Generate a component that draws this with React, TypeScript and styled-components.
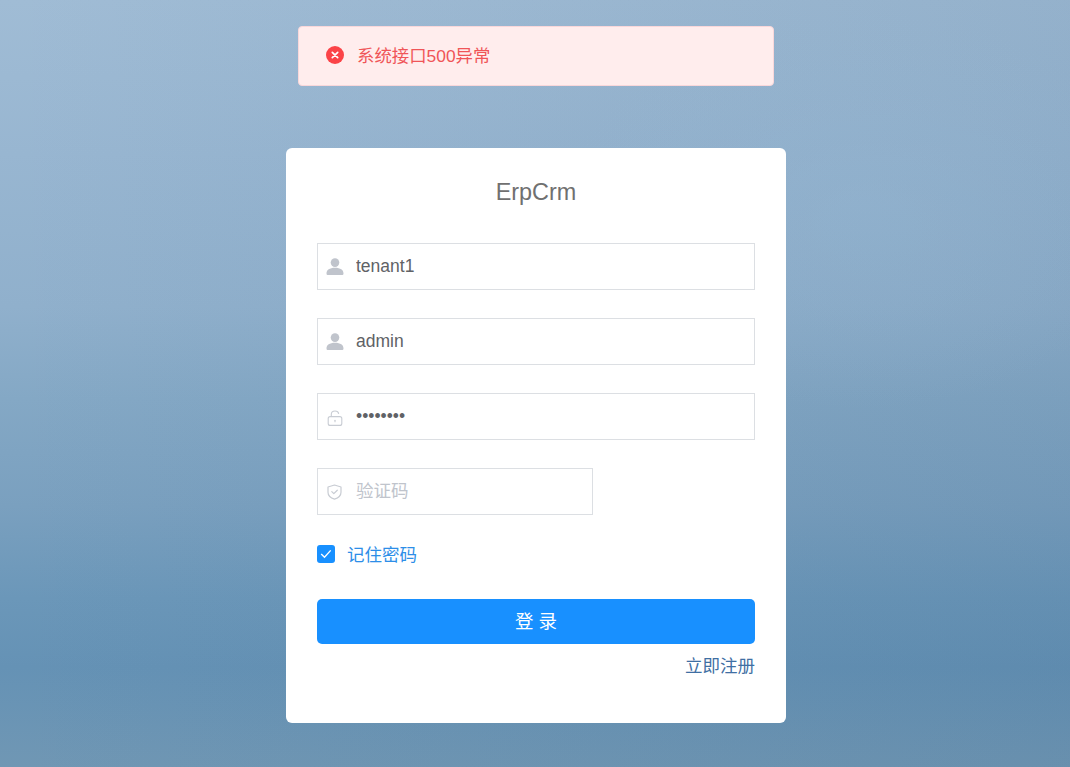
import React from "react";
import styled, { createGlobalStyle } from "styled-components";

const GlobalStyle = createGlobalStyle`
  html, body {
    margin: 0;
    padding: 0;
    height: 100%;
    overflow: hidden;
    font-family: "Liberation Sans", "Noto Sans CJK SC", sans-serif;
  }
`;

const Page = styled.div`
  position: relative;
  height: 767px;
  box-sizing: border-box;
  padding: 148px 0 0 2px;
  display: flex;
  justify-content: center;
  align-items: flex-start;
  overflow: hidden;
  background:
    radial-gradient(ellipse 300px 200px at 860px 210px, rgba(150, 184, 212, 0.35), rgba(150, 184, 212, 0) 100%),
    linear-gradient(90deg, rgba(30, 70, 110, 0) 0%, rgba(30, 70, 110, 0.04) 45%, rgba(30, 70, 110, 0.09) 100%),
    linear-gradient(180deg, #a0bcd5 0%, #98b6d1 20%, #90b0cc 40%, #84a8c5 52%, #7aa0bf 66%, #6b97b9 78%, #6592b5 87%, #7097b4 100%);
`;

const Message = styled.div`
  position: absolute;
  top: 26px;
  left: 298px;
  width: 476px;
  height: 60px;
  box-sizing: border-box;
  padding: 0 0 3px 27px;
  display: flex;
  align-items: center;
  gap: 13px;
  background: #ffeded;
  border: 1px solid #f9d7da;
  border-radius: 4px;
  color: #f05558;
  font-size: 17.4px;
`;

const MessageText = styled.span`
  margin-bottom: 1px;
`;

const Card = styled.form`
  width: 500px;
  height: 575px;
  box-sizing: border-box;
  padding: 0 31px;
  background: #fff;
  border-radius: 6px;
  display: flex;
  flex-direction: column;
`;

const Title = styled.h3`
  margin: 31px 0 37px;
  height: 27px;
  line-height: 27px;
  text-align: center;
  font-size: 23.4px;
  font-weight: 400;
  color: #707070;
`;

const Field = styled.div<{ $narrow?: boolean }>`
  width: ${(p) => (p.$narrow ? "276px" : "438px")};
  height: 47px;
  box-sizing: border-box;
  margin-bottom: 28px;
  display: flex;
  align-items: center;
  border: 1px solid #dcdfe3;
`;

const FieldIcon = styled.span<{ $drop?: number }>`
  width: 33px;
  margin-right: 4px;
  padding-top: ${(p) => p.$drop ?? 0}px;
  flex: none;
  display: flex;
  justify-content: center;
  align-items: center;
  color: #c0c4cc;
`;

const TextInput = styled.input`
  flex: 1;
  min-width: 0;
  height: 100%;
  padding: 0 0 0 1px;
  border: 0;
  outline: 0;
  background: transparent;
  font: inherit;
  font-size: 17.5px;
  color: #606266;

  &::placeholder {
    color: #c0c4cc;
  }
`;

const Remember = styled.label`
  margin-top: -2px;
  height: 26px;
  display: flex;
  align-items: center;
  gap: 12px;
  font-size: 17.5px;
  color: #2d8ee8;
`;

const RememberText = styled.span`
  margin-bottom: 2px;
`;

const CheckBox = styled.span`
  width: 18px;
  height: 18px;
  display: flex;
  justify-content: center;
  align-items: center;
  background: #1890ff;
  border-radius: 3px;
  color: #fff;
`;

const Submit = styled.button`
  margin-top: 32px;
  width: 100%;
  height: 45px;
  padding: 0 0 4px;
  border: 0;
  border-radius: 5px;
  background: #1890ff;
  color: #fff;
  font: inherit;
  font-size: 18.5px;
`;

const FootRow = styled.div`
  margin-top: 11px;
  display: flex;
  justify-content: flex-end;
`;

const RegisterLink = styled.a`
  font-size: 17.5px;
  line-height: 22px;
  color: #3f6fa3;
`;

const ErrorIcon = () => (
  <svg width="18" height="18" viewBox="0 0 18 18">
    <circle cx="9" cy="9" r="9" fill="#fb4347" />
    <path d="M6.3 6.3l5.4 5.4M11.7 6.3l-5.4 5.4" stroke="#fff" strokeWidth="1.7" strokeLinecap="round" />
  </svg>
);

const UserIcon = () => (
  <svg width="18" height="18" viewBox="0 0 18 18" fill="#c0c4cc">
    <circle cx="9" cy="4.6" r="4.3" />
    <path d="M0.5 15.500C0.5 12 3.600 9.800 9 9.800s8.500 2.200 8.500 5.700c0 1-.6 1.500-1.600 1.500H2.100c-1 0-1.600-.5-1.600-1.500z" />
  </svg>
);

const LockIcon = () => (
  <svg width="16" height="16" viewBox="0 0 16 16" fill="none" stroke="#c8ccd3" strokeWidth="1.1">
    <rect x="1.200" y="6.600" width="13.600" height="8.800" rx="2" />
    <path d="M4.300 6.600V4.300C4.300 2.300 5.900 1 8 1s3.400 1 3.700 2.800" />
    <path d="M8 10.300v1.500" strokeLinecap="round" />
  </svg>
);

const ShieldIcon = () => (
  <svg width="15" height="16" viewBox="0 0 15 16" fill="none" stroke="#c8ccd3" strokeWidth="1.200">
    <path d="M7.500 1L14 3v5.200c0 3.400-2.800 5.800-6.500 6.900C3.800 14 1 11.600 1 8.200V3z" strokeLinejoin="round" />
    <path d="M4.800 7.600l2 2 3.500-3.400" strokeLinecap="round" strokeLinejoin="round" />
  </svg>
);

const CheckIcon = () => (
  <svg width="12" height="10" viewBox="0 0 12 10" fill="none" stroke="#fff" strokeWidth="1.400">
    <path d="M1.200 5l3.300 3.200 6.200-6.800" />
  </svg>
);

export default function App() {
  return (
    <>
      <GlobalStyle />
      <Page>
        <Message>
          <ErrorIcon />
          <MessageText>系统接口500异常</MessageText>
        </Message>
        <Card onSubmit={(e) => e.preventDefault()}>
          <Title>ErpCrm</Title>
          <Field>
            <FieldIcon><UserIcon /></FieldIcon>
            <TextInput defaultValue="tenant1" />
          </Field>
          <Field>
            <FieldIcon><UserIcon /></FieldIcon>
            <TextInput defaultValue="admin" />
          </Field>
          <Field>
            <FieldIcon $drop={2}><LockIcon /></FieldIcon>
            <TextInput type="password" defaultValue="admin123" />
          </Field>
          <Field $narrow>
            <FieldIcon><ShieldIcon /></FieldIcon>
            <TextInput placeholder="验证码" />
          </Field>
          <Remember>
            <CheckBox><CheckIcon /></CheckBox>
            <RememberText>记住密码</RememberText>
          </Remember>
          <Submit type="submit">登 录</Submit>
          <FootRow>
            <RegisterLink>立即注册</RegisterLink>
          </FootRow>
        </Card>
      </Page>
    </>
  );
}
